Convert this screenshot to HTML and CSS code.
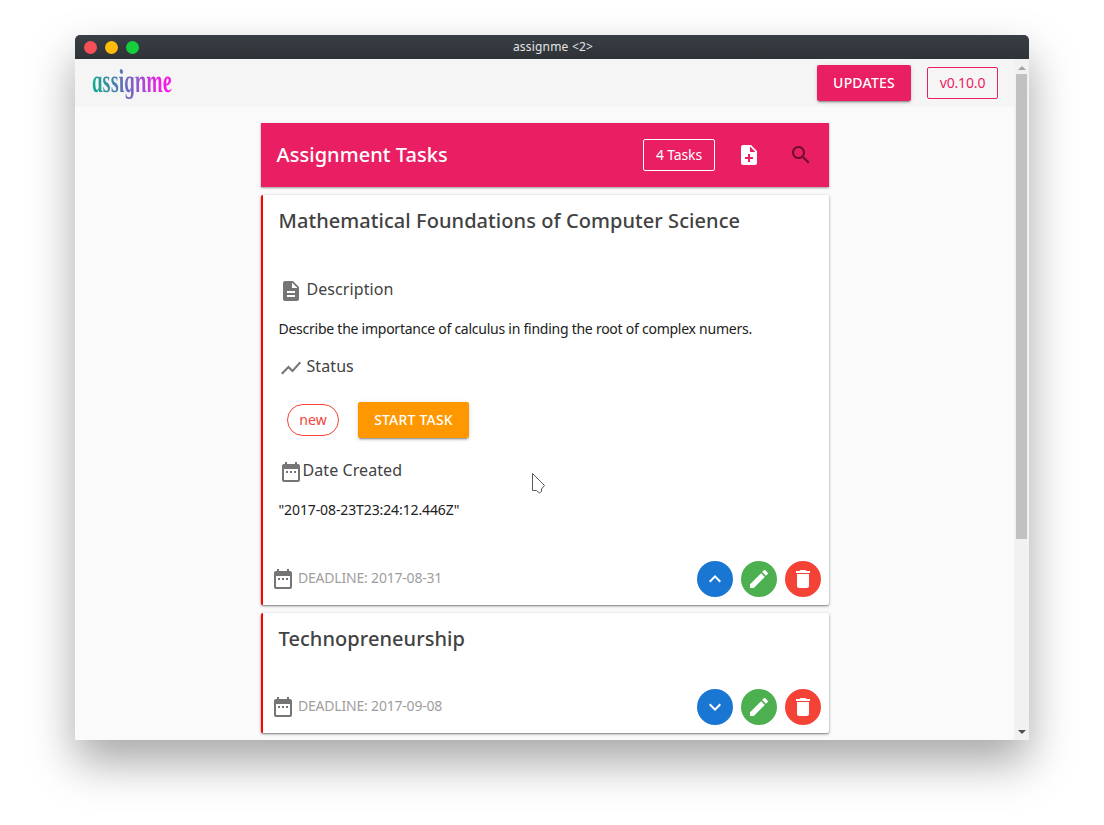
FILE: index.html
```html
<!DOCTYPE html>
<html lang="en">
<head>
<meta charset="utf-8">
<title>assignme</title>
<link rel="stylesheet" href="styles.css">
</head>
<body>
<svg class="sprite" aria-hidden="true">
  <symbol id="note-add" viewBox="0 0 24 24"><path d="M14 2H6c-1.1 0-2 .9-2 2v16c0 1.1.9 2 2 2h12c1.1 0 2-.9 2-2V8l-6-6zm2 14h-3v3h-2v-3H8v-2h3v-3h2v3h3v2zm-3-7V3.500L18.500 9H13z"/></symbol>
  <symbol id="search" viewBox="0 0 24 24"><path d="M15.500 14h-.790l-.280-.270C15.410 12.590 16 11.110 16 9.500 16 5.910 13.090 3 9.500 3S3 5.910 3 9.500 5.910 16 9.500 16c1.610 0 3.090-.590 4.230-1.570l.270.280v.790l5 4.990L20.490 19l-4.990-5zm-6 0C7.010 14 5 11.990 5 9.500S7.010 5 9.500 5 14 7.010 14 9.500 11.990 14 9.500 14z"/></symbol>
  <symbol id="description" viewBox="0 0 24 24"><path d="M14 2H6c-1.1 0-2 .9-2 2v16c0 1.1.9 2 2 2h12c1.1 0 2-.9 2-2V8l-6-6zm2 16H8v-2h8v2zm0-4H8v-2h8v2zm-3-5V3.500L18.500 9H13z"/></symbol>
  <symbol id="chart" viewBox="0 0 24 24"><path d="M3.500 18.490l6-6.010 4 4L22 6.920l-1.410-1.410-7.090 7.970-4-4L2 16.990z"/></symbol>
  <symbol id="date" viewBox="0 0 24 24"><path d="M9 11H7v2h2v-2zm4 0h-2v2h2v-2zm4 0h-2v2h2v-2zm2-7h-1V2h-2v2H8V2H6v2H5c-1.110 0-2 .9-2 2v14c0 1.100.890 2 2 2h14c1.100 0 2-.9 2-2V6c0-1.100-.9-2-2-2zm0 16H5V9h14v11z"/></symbol>
  <symbol id="up" viewBox="0 0 24 24"><path d="M7.410 15.410L12 10.830l4.590 4.580L18 14l-6-6-6 6z"/></symbol>
  <symbol id="down" viewBox="0 0 24 24"><path d="M7.410 8.590L12 13.170l4.590-4.580L18 10l-6 6-6-6z"/></symbol>
  <symbol id="edit" viewBox="0 0 24 24"><path d="M3 17.250V21h3.750L17.810 9.940l-3.750-3.750L3 17.250zM20.710 7.040c.390-.390.390-1.020 0-1.410l-2.340-2.340c-.390-.390-1.020-.390-1.410 0l-1.830 1.830 3.750 3.750 1.830-1.830z"/></symbol>
  <symbol id="trash" viewBox="0 0 24 24"><path d="M6 19c0 1.100.9 2 2 2h8c1.100 0 2-.9 2-2V7H6v12zM19 4h-3.500l-1-1h-5l-1 1H5v2h14V4z"/></symbol>
</svg>

<div class="window">
  <div class="titlebar">
    <div class="lights"><i class="light red"></i><i class="light yellow"></i><i class="light green"></i></div>
    <span class="window-title">assignme &lt;2&gt;</span>
  </div>
  <div class="viewport">
    <main class="page">
      <header class="appbar">
        <span class="logo"><span class="logo-text">assignme</span></span>
        <button class="btn btn-pink">UPDATES</button>
        <span class="version">v0.10.0</span>
      </header>
      <section class="list">
        <div class="toolbar">
          <h1 class="heading">Assignment Tasks</h1>
          <span class="count">4 Tasks</span>
          <svg class="icon add"><use href="#note-add"/></svg>
          <svg class="icon find"><use href="#search"/></svg>
        </div>

        <article class="card card-open">
          <h2 class="card-title">Mathematical Foundations of Computer Science</h2>
          <div class="details">
            <h3 class="row row-description"><svg class="icon"><use href="#description"/></svg><span>Description</span></h3>
            <p class="text text-body">Describe the importance of calculus in finding the root of complex numers.</p>
            <h3 class="row row-status"><svg class="icon"><use href="#chart"/></svg><span>Status</span></h3>
            <div class="status">
              <span class="chip">new</span>
              <button class="btn btn-orange">START TASK</button>
            </div>
            <h3 class="row row-date"><svg class="icon"><use href="#date"/></svg><span>Date Created</span></h3>
            <p class="text text-date">"2017-08-23T23:24:12.446Z"</p>
          </div>
          <footer class="card-foot">
            <svg class="icon"><use href="#date"/></svg>
            <span class="deadline">DEADLINE: 2017-08-31</span>
            <span class="round blue"><svg class="icon"><use href="#up"/></svg></span>
            <span class="round green-bg"><svg class="icon"><use href="#edit"/></svg></span>
            <span class="round red-bg"><svg class="icon"><use href="#trash"/></svg></span>
          </footer>
        </article>

        <article class="card card-closed">
          <h2 class="card-title">Technopreneurship</h2>
          <footer class="card-foot">
            <svg class="icon"><use href="#date"/></svg>
            <span class="deadline">DEADLINE: 2017-09-08</span>
            <span class="round blue"><svg class="icon"><use href="#down"/></svg></span>
            <span class="round green-bg"><svg class="icon"><use href="#edit"/></svg></span>
            <span class="round red-bg"><svg class="icon"><use href="#trash"/></svg></span>
          </footer>
        </article>
      </section>
    </main>
    <div class="scrollbar"><i class="arrow arrow-up"></i><i class="thumb"></i><i class="arrow arrow-down"></i></div>
  </div>
  <svg class="cursor" viewBox="0 0 14 22"><path d="M1.500 1.500V18.500H5.500L8.500 21L10.500 19.500V17L13.500 13.500Z"/></svg>
</div>
</body>
</html>
```
FILE: styles.css
```css
* { box-sizing: border-box; }
body {
  margin: 0;
  height: 825px;
  overflow: hidden;
  background: #fff;
  font-family: "Noto Sans", "Open Sans", sans-serif;
  font-size: 14px;
  color: #212121;
  padding: 35px 75px;
}
h1, h2, h3, p { margin: 0; }
.sprite { position: absolute; width: 0; height: 0; }

.window {
  position: relative;
  width: 954px;
  height: 705px;
  border-radius: 5px 5px 0 0;
  box-shadow: 0 22px 46px rgba(0, 0, 0, .35);
}
.titlebar {
  display: grid;
  grid-template-columns: 1fr auto 1fr;
  align-items: center;
  height: 24px;
  padding: 0 9px;
  border-radius: 5px 5px 0 0;
  background: linear-gradient(#383e45, #2f3337);
}
.lights { display: flex; gap: 8px; }
.light { width: 13px; height: 13px; border-radius: 50%; }
.red { background: #f64f57; }
.yellow { background: #fdbc09; }
.green { background: #15cf3c; }
.window-title {
  padding: 0 0 1px 2px;
  font-size: 12px;
  letter-spacing: .2px;
  white-space: nowrap;
  color: #e3e5e6;
}

.viewport { display: flex; height: 681px; background: #fafafa; }
.page { flex: 1; overflow: hidden; }
.appbar {
  display: flex;
  align-items: center;
  height: 48px;
  padding: 0 16px 0 18px;
  background: #f5f5f5;
}
.logo { width: 724px; height: 48px; }
.logo-text {
  display: inline-block;
  font: italic bold 33px/45px "Liberation Serif", serif;
  transform: scaleX(.63) skewX(11deg);
  transform-origin: 0 70%;
  background: linear-gradient(90deg, #0fae8c, #5873b5 35%, #8d5ccb 55%, #f31ae8 85%);
  -webkit-background-clip: text;
  background-clip: text;
  color: transparent;
}
.btn {
  display: flex;
  align-items: center;
  justify-content: center;
  height: 36px;
  padding: 0 0 2px;
  border: 0;
  border-radius: 2px;
  color: #fff;
  font: 500 14px "Noto Sans", sans-serif;
  letter-spacing: .2px;
  white-space: nowrap;
  box-shadow: 0 3px 1px -2px rgba(0,0,0,.2), 0 2px 2px rgba(0,0,0,.14), 0 1px 5px rgba(0,0,0,.12);
}
.btn-pink { width: 94px; background: #e91e63; }
.version {
  display: flex;
  align-items: center;
  justify-content: center;
  width: 71px;
  height: 32px;
  margin-left: 16px;
  padding-bottom: 2px;
  border: 1px solid #e91e63;
  border-radius: 2px;
  letter-spacing: -.15px;
  color: #e91e63;
}

.list { width: 568px; margin: 16px 0 0 186px; }
.toolbar {
  display: flex;
  align-items: center;
  height: 64px;
  padding: 0 16.5px 0 15.5px;
  background: #e91e63;
  color: #fff;
  box-shadow: 0 1px 2px rgba(0,0,0,.4);
}
.heading { flex: 1; padding-bottom: 2px; font-size: 20px; font-weight: 500; letter-spacing: .05px; }
.count {
  display: flex;
  align-items: center;
  justify-content: center;
  width: 72px;
  height: 32px;
  padding-bottom: 2px;
  border: 1px solid #fff;
  border-radius: 2px;
  letter-spacing: -.15px;
}
.icon { display: block; flex: none; width: 24px; height: 24px; fill: currentColor; }
.add { margin-left: 21.5px; }
.find { margin-left: 28px; color: rgba(0,0,0,.54); }

.card {
  display: flex;
  flex-direction: column;
  margin-top: 8px;
  border-left: 2px solid #f00;
  border-radius: 2px;
  background: #fff;
  box-shadow: 0 1px 2px rgba(0,0,0,.45), 0 1px 4px rgba(0,0,0,.12);
}
.card-open { height: 410px; }
.card-closed { height: 120px; }
.card-title {
  height: 52px;
  padding-left: 15.5px;
  font-size: 20px;
  font-weight: 500;
  line-height: 52px;
  letter-spacing: .06px;
  color: #424242;
}
.details { padding: 30px 15.500px 0; }
.row {
  display: flex;
  height: 28px;
  font-size: 16px;
  font-weight: 400;
  line-height: 24px;
  letter-spacing: .08px;
  color: #424242;
}
.row .icon { margin-top: 2px; color: #757575; }
.row-description span, .row-status span { margin-left: 4px; }
.text { height: 20px; margin-top: 14px; line-height: 20px; white-space: nowrap; }
.text-body { letter-spacing: -.25px; }
.text-date { letter-spacing: -.11px; }
.row-status { margin-top: 15px; }
.status { display: flex; align-items: center; gap: 19px; height: 36px; margin: 20px 0 0 8.5px; }
.chip {
  display: flex;
  align-items: center;
  justify-content: center;
  width: 52px;
  height: 32px;
  padding-bottom: 2px;
  border: 1px solid #f44336;
  border-radius: 16px;
  color: #f44336;
}
.btn-orange { width: 111px; background: #ff9800; }
.row-date { margin-top: 20px; }
.card-foot {
  display: flex;
  align-items: center;
  gap: 8px;
  height: 52px;
  margin-top: auto;
  padding: 0 8px 0 7.5px;
  color: #757575;
}
.deadline { flex: 1; margin-left: -4.5px; padding-bottom: 3px; letter-spacing: -.2px; color: #9e9e9e; }
.round {
  display: flex;
  align-items: center;
  justify-content: center;
  width: 36px;
  height: 36px;
  border-radius: 50%;
  color: #fff;
}
.round .icon { margin-right: 1px; }
.blue { background: #1976d2; }
.green-bg { background: #4caf50; }
.red-bg { background: #f44336; }

.scrollbar {
  display: flex;
  flex-direction: column;
  align-items: center;
  width: 15px;
  background: #f1f1f1;
}
.thumb { width: 11px; height: 465px; margin: 4px 0 auto; background: #c1c1c1; }
.arrow { width: 0; height: 0; border: 4px solid transparent; }
.arrow-up { margin-top: 7px; border-top: 0; border-bottom-color: #a3a3a3; }
.arrow-down { margin-bottom: 6px; border-bottom: 0; border-top-color: #505050; }
.cursor {
  position: absolute;
  left: 456px;
  top: 437px;
  width: 14px;
  height: 22px;
  fill: #fff;
  stroke: #555b60;
}
```
